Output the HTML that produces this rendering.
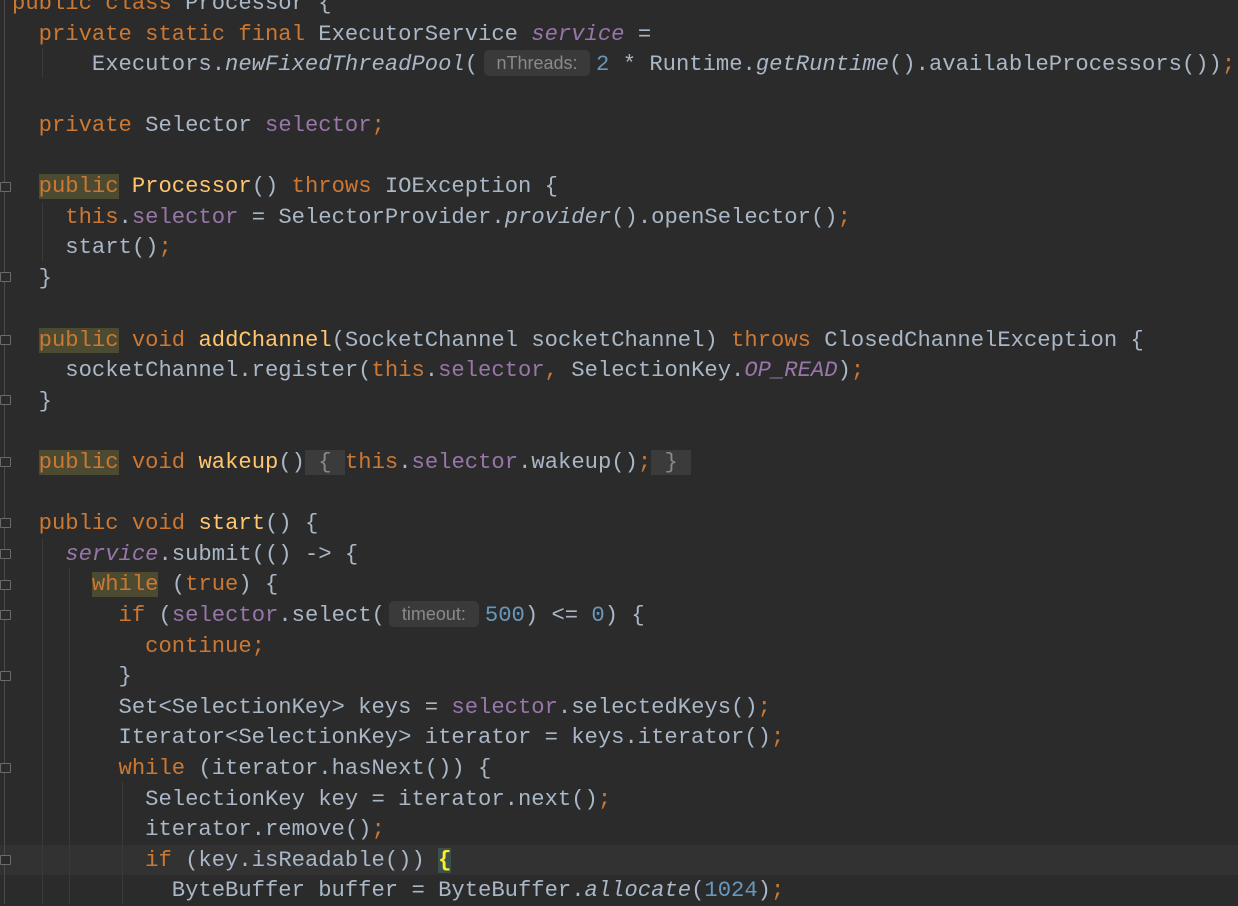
<!DOCTYPE html>
<html><head><meta charset="utf-8">
<style>
html,body{margin:0;padding:0;background:#2b2b2b;width:1238px;height:904px;overflow:hidden;}
#w{position:absolute;left:0;top:2px;width:1238px;height:904px;}
.l{position:absolute;left:12px;height:30px;line-height:30px;white-space:pre;font-family:"Liberation Mono",monospace;font-size:22.2px;color:#a9b7c6;}
.k{color:#cc7832}.f{color:#9876aa}.m{color:#ffc66d}.n{color:#6897bb}.i{font-style:italic}
.hl{background:#4c4a31}
.h{display:inline-block;font-family:"Liberation Sans",sans-serif;font-size:18px;color:#8a8a8a;background:#3a3a3a;border-radius:5px;height:26px;line-height:26px;vertical-align:1px;text-align:center;margin-right:6px;}
.fold{background:#3b3b3b;color:#8a8a8a}
.br{background:#3b514d;color:#ffef28;font-weight:bold}
.g{position:absolute;left:4px;top:0;width:1px;height:904px;background:#4a4a4a}
.cur{position:absolute;left:0;top:845px;width:1238px;height:30px;background:#323232}
.fm{position:absolute;left:0;width:9px;height:8px;border:1px solid #6a6a6a;border-radius:1px;background:#2b2b2b}
.ig{position:absolute;width:1px;background:#3a3a3a}
</style></head><body>
<div class="cur"></div>
<div class="g"></div>
<div class="fm" style="top:182px"></div><div class="fm" style="top:272px"></div>
<div class="fm" style="top:335px"></div><div class="fm" style="top:395px"></div>
<div class="fm" style="top:457px"></div><div class="fm" style="top:518px"></div>
<div class="fm" style="top:549px"></div><div class="fm" style="top:580px"></div>
<div class="fm" style="top:610px"></div><div class="fm" style="top:671px"></div>
<div class="fm" style="top:763px"></div><div class="fm" style="top:855px"></div>
<div class="ig" style="left:42px;top:48px;height:30px"></div>
<div class="ig" style="left:42px;top:202px;height:60px"></div>
<div class="ig" style="left:42px;top:538px;height:366px"></div>
<div class="ig" style="left:69px;top:568px;height:336px"></div>
<div class="ig" style="left:122px;top:782px;height:122px"></div>
<div id="w">
<div class="l" style="top:-13px"><span class="k">public class</span> Processor {</div>
<div class="l" style="top:18px">  <span class="k">private static final</span> ExecutorService <span class="f i">service</span> =</div>
<div class="l" style="top:48px">      Executors.<span class="i">newFixedThreadPool</span>(<span class="h" style="width:106px;margin-left:6px">nThreads:</span><span class="n">2</span> * Runtime.<span class="i">getRuntime</span>().availableProcessors())<span class="k">;</span></div>
<div class="l" style="top:109px">  <span class="k">private</span> Selector <span class="f">selector</span><span class="k">;</span></div>
<div class="l" style="top:170px">  <span class="k hl">public</span> <span class="m">Processor</span>() <span class="k">throws</span> IOException {</div>
<div class="l" style="top:201px">    <span class="k">this</span>.<span class="f">selector</span> = SelectorProvider.<span class="i">provider</span>().openSelector()<span class="k">;</span></div>
<div class="l" style="top:231px">    start()<span class="k">;</span></div>
<div class="l" style="top:262px">  }</div>
<div class="l" style="top:324px">  <span class="k hl">public</span> <span class="k">void</span> <span class="m">addChannel</span>(SocketChannel socketChannel) <span class="k">throws</span> ClosedChannelException {</div>
<div class="l" style="top:354px">    socketChannel.register(<span class="k">this</span>.<span class="f">selector</span><span class="k">,</span> SelectionKey.<span class="f i">OP_READ</span>)<span class="k">;</span></div>
<div class="l" style="top:385px">  }</div>
<div class="l" style="top:446px">  <span class="k hl">public</span> <span class="k">void</span> <span class="m">wakeup</span>()<span class="fold"> { </span><span class="k">this</span>.<span class="f">selector</span>.wakeup()<span class="k">;</span><span class="fold"> } </span></div>
<div class="l" style="top:507px">  <span class="k">public void</span> <span class="m">start</span>() {</div>
<div class="l" style="top:538px">    <span class="f i">service</span>.submit(() -&gt; {</div>
<div class="l" style="top:568px">      <span class="k hl">while</span> (<span class="k">true</span>) {</div>
<div class="l" style="top:599px">        <span class="k">if</span> (<span class="f">selector</span>.select(<span class="h" style="width:90px;margin-left:4px">timeout:</span><span class="n">500</span>) &lt;= <span class="n">0</span>) {</div>
<div class="l" style="top:630px">          <span class="k">continue;</span></div>
<div class="l" style="top:660px">        }</div>
<div class="l" style="top:691px">        Set&lt;SelectionKey&gt; keys = <span class="f">selector</span>.selectedKeys()<span class="k">;</span></div>
<div class="l" style="top:721px">        Iterator&lt;SelectionKey&gt; iterator = keys.iterator()<span class="k">;</span></div>
<div class="l" style="top:752px">        <span class="k">while</span> (iterator.hasNext()) {</div>
<div class="l" style="top:783px">          SelectionKey key = iterator.next()<span class="k">;</span></div>
<div class="l" style="top:813px">          iterator.remove()<span class="k">;</span></div>
<div class="l" style="top:844px">          <span class="k">if</span> (key.isReadable()) <span class="br">{</span></div>
<div class="l" style="top:874px">            ByteBuffer buffer = ByteBuffer.<span class="i">allocate</span>(<span class="n">1024</span>)<span class="k">;</span></div>
</div>
</body></html>
